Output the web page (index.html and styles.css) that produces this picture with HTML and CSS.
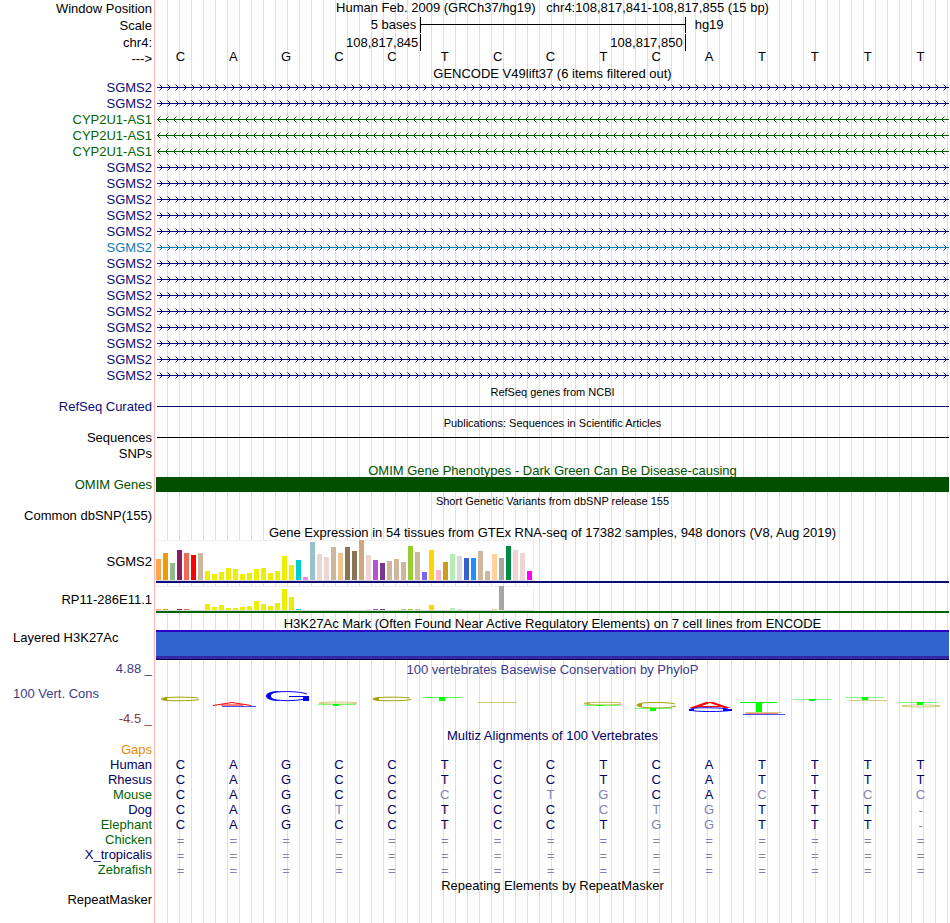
FILE: index.html
```html
<!DOCTYPE html>
<html lang="en">
<head>
    <meta charset="UTF-8">
    <meta name="viewport" content="width=device-width, initial-scale=1.0">
    <title>Genome Browser chr4:108,817,841-108,817,855</title>
    <link rel="stylesheet" href="styles.css">
</head>
<body>
    <!-- arrow patterns shared by the gene rows -->
    <svg class="defs" aria-hidden="true">
        <defs>
            <pattern id="coding" width="8" height="16" patternUnits="userSpaceOnUse">
                <path class="arrow coding" d="M3.5 4.5L6.5 7.5L3.5 10.5"/>
            </pattern>
            <pattern id="noncoding" width="8" height="16" patternUnits="userSpaceOnUse">
                <path class="arrow noncoding" d="M4.5 4.5L1.5 7.5L4.5 10.5"/>
            </pattern>
            <pattern id="other" width="8" height="16" patternUnits="userSpaceOnUse">
                <path class="arrow other" d="M3.5 4.5L6.5 7.5L3.5 10.5"/>
            </pattern>
        </defs>
    </svg>

    <main class="browser">
        <div class="row ruler">
            <span class="label">Window Position</span>
            <h1 class="position">Human Feb. 2009 (GRCh37/hg19) &nbsp; chr4:108,817,841-108,817,855 (15 bp)</h1>
        </div>
        <div class="row ruler">
            <span class="label">Scale</span>
            <div class="thirds scale">
                <span class="before">5 bases</span>
                <span class="tick"><span class="bar"></span></span>
                <span class="tick after">hg19</span>
            </div>
        </div>
        <div class="row ruler">
            <span class="label">chr4:</span>
            <div class="thirds coords">
                <span class="before">108,817,845</span>
                <span class="tick before">108,817,850</span>
                <span class="tick"></span>
            </div>
        </div>
        <div class="row strand">
            <span class="label">---&gt;</span>
            <div class="bases" data-seq="CAGCCTCCTCATTTT"></div>
        </div>

        <h2 class="title tight">GENCODE V49lift37 (6 items filtered out)</h2>
        <div id="genes"></div>

        <h2 class="title small">RefSeq genes from NCBI</h2>
        <div class="row">
            <span class="label coding">RefSeq Curated</span>
            <div class="line coding"></div>
        </div>

        <h2 class="title small">Publications: Sequences in Scientific Articles</h2>
        <div class="row">
            <span class="label">Sequences</span>
            <div class="line"></div>
        </div>
        <div class="row">
            <span class="label">SNPs</span>
        </div>

        <h2 class="title omim">OMIM Gene Phenotypes - Dark Green Can Be Disease-causing</h2>
        <div class="row">
            <span class="label omim">OMIM Genes</span>
            <div class="omim-bar"></div>
        </div>

        <h2 class="title small">Short Genetic Variants from dbSNP release 155</h2>
        <div class="row">
            <span class="label">Common dbSNP(155)</span>
        </div>

        <h2 class="title tall">Gene Expression in 54 tissues from GTEx RNA-seq of 17382 samples, 948 donors (V8, Aug 2019)</h2>
        <div class="row gtex">
            <span class="label">SGMS2</span>
            <div class="expression coding"><div class="bars high" id="gtex-sgms2"></div></div>
        </div>
        <div class="row gtex">
            <span class="label">RP11-286E11.1</span>
            <div class="expression noncoding"><div class="bars low" id="gtex-rp11"></div></div>
        </div>

        <h2 class="title histone">H3K27Ac Mark (Often Found Near Active Regulatory Elements) on 7 cell lines from ENCODE</h2>
        <div class="row">
            <span class="label left">Layered H3K27Ac</span>
            <div class="h3k27ac"></div>
        </div>

        <div class="row conservation">
            <div class="axis">
                <span class="label phylop">4.88 _</span>
                <span class="label phylop left">100 Vert. Cons</span>
                <span class="label negative">-4.5 _</span>
            </div>
            <div>
                <h2 class="phylop">100 vertebrates Basewise Conservation by PhyloP</h2>
                <svg class="logo" viewBox="0 0 793 49" preserveAspectRatio="none" role="img" aria-label="Conservation logo">
                    <!-- 1 -->
                    <g class="c"><path d="M42 20C38 19 5 18.500 5 21S38 23 43 21.500"/><path class="cfill" d="M5 21L11 19V23Z"/></g>
                    <!-- 2 -->
                    <path class="a" d="M57 27.5L76 24.5L95 27.5M65 27H87"/>
                    <path class="g thin" d="M66 28.5H100"/>
                    <!-- 3 -->
                    <path class="g" d="M151 16C141 12.500 111 12.500 111 18S143 24 151 20"/>
                    <path class="gfill" d="M110 18C110 14 118 13 124 13C117 15 115 16 115 18S117 21 124 23C118 23 110 22 110 18Z"/>
                    <path class="g" d="M133 18.500H153"/><rect class="gfill" x="147" y="18" width="6" height="5"/>
                    <!-- 4 -->
                    <ellipse class="c faint" cx="182" cy="25" rx="19" ry="1"/>
                    <path class="t faint" d="M162 26.500H200"/><rect class="tfill" x="177" y="26" width="6" height="2"/>
                    <!-- 5 -->
                    <g class="c"><path d="M254 20C250 19 217 18.500 217 21S250 23 255 21.500"/><path class="cfill" d="M216 21L223 19V23Z"/></g>
                    <!-- 6 -->
                    <path class="t thin" d="M267 19.500H305"/><rect class="tfill" x="283" y="19" width="6" height="4"/>
                    <!-- 7 -->
                    <path class="c faint" d="M322 24.500H361"/>
                    <!-- 9 -->
                    <g class="c thin"><path d="M465 25C461 24 428 24 428 25.500S461 27.500 466 26"/><path class="cfill" d="M427 25.500L434 24V27Z"/></g>
                    <path class="t faint" d="M428 27.500H464"/><rect class="tfill" x="441" y="27" width="6" height="1"/>
                    <!-- 10 -->
                    <g class="c"><path d="M519 26C513 24 482 23.500 481 27S512 31 520 28"/><path class="cfill" d="M480 27L486 25V29Z"/></g>
                    <path class="t faint" d="M478 30.500H516"/><rect class="tfill" x="494" y="30" width="6" height="3"/>
                    <!-- 11 -->
                    <path class="afill" d="M533 30L550 24H557L575 30H568L554 25L540 30Z"/><path class="a" d="M542 28.500H566"/>
                    <path class="g" d="M572 31C564 29.500 534 29 534 31.500S564 34 574 32.500"/><rect class="gfill" x="533" y="31" width="5" height="2"/><rect class="gfill" x="567" y="31" width="9" height="2"/>
                    <!-- 12 -->
                    <path class="t" d="M584 24.500H621"/><rect class="tfill" x="600" y="24" width="6" height="10"/>
                    <path class="c faint" d="M589 34.500H626"/><path class="a faint" d="M590 35.500H622"/><path class="g thin" d="M587 36.500H629"/>
                    <!-- 13 -->
                    <path class="t faint" d="M637 21.500H675"/><rect class="tfill" x="653" y="21" width="6" height="2"/>
                    <!-- 14 -->
                    <path class="t faint" d="M690 19.500H728"/><rect class="tfill" x="706" y="19" width="6" height="3"/>
                    <path class="c faint" d="M693 22.500H731"/>
                    <!-- 15 -->
                    <path class="t faint" d="M743 24.500H781"/><rect class="tfill" x="761" y="24" width="6" height="3"/>
                    <ellipse class="c faint" cx="765" cy="28" rx="19" ry="1"/>
                </svg>
            </div>
        </div>

        <h2 class="title multiz">Multiz Alignments of 100 Vertebrates</h2>
        <div class="row species"><span class="label gaps">Gaps</span></div>
        <div id="alignments"></div>

        <h2 class="title">Repeating Elements by RepeatMasker</h2>
        <div class="row">
            <span class="label">RepeatMasker</span>
        </div>
    </main>

    <script src="script.js"></script>
</body>
</html>
```

FILE: styles.css
```css
body {
    margin: 0 1px 0 0;
    background-color: #fff;
    color: #000;
    font-family: "Liberation Sans", Arial, sans-serif;
    font-size: 13px;
    line-height: 16px;
}
h1, h2 {
    margin: 0;
    font-size: 13px;
    font-weight: normal;
    text-align: center;
    white-space: nowrap;
}
.defs {
    position: absolute;
    width: 0;
    height: 0;
}

/* label column, red divider, then a guideline every 12px */
.browser {
    min-height: 100vh;
    background:
        linear-gradient(#fff, #fff) 0 0 / 154px 100% no-repeat,
        linear-gradient(#ffb4b4, #ffb4b4) 154px 0 / 1px 100% no-repeat,
        linear-gradient(#fff, #fff) 155px 0 / 12px 100% no-repeat,
        linear-gradient(to right, #dcdcf8 1px, transparent 1px) 167px 0 / 12px 100%;
}
.row {
    display: grid;
    grid-template-columns: 152px 1fr;
    column-gap: 4px;
}
.label {
    text-align: right;
    white-space: nowrap;
}
.label.left {
    text-align: left;
    padding-left: 13px;
}
.title {
    height: 15px;
    padding-left: 156px;
    line-height: 17px;
}
.title.small {
    font-size: 11px;
}
.title.tight {
    height: 14px;
    line-height: 16px;
}
.title.tall {
    height: 16px;
    line-height: 18px;
}
.title.histone {
    height: 14px;
    padding-top: 3px;
    line-height: 16px;
}

/* track colours */
.coding { color: #0c0c78; }
.noncoding { color: #006400; }
.other { color: #1478b4; }
.omim { color: #005000; }
.phylop { color: #3c3c8c; }
.negative { color: #8c3c3c; }
.multiz { color: #000064; }
.gaps { color: #e68a00; }

/* ruler */
.ruler .label {
    line-height: 17px;
}
.thirds {
    display: grid;
    grid-template-columns: repeat(3, 1fr);
}
.before {
    text-align: right;
    padding-right: 4px;
}
.after {
    padding-left: 9px;
}
.tick {
    border-left: 1px solid #000;
}
.scale {
    margin-bottom: 1px;
}
.coords {
    height: 15px;
    line-height: 17px;
}
.coords .before {
    padding-right: 2px;
}
.bar {
    display: block;
    height: 1px;
    margin-top: 7px;
    background-color: #000;
}
.strand {
    line-height: 15px;
}
.strand .bases {
    line-height: 11px;
}
.bases {
    display: grid;
    grid-template-columns: repeat(15, 1fr);
    text-align: center;
}
.bases span {
    padding-right: 4px;
}

/* genes */
.intron {
    display: block;
    width: 100%;
    height: 16px;
}
.intron line, .arrow {
    stroke: currentColor;
    stroke-width: 1;
    fill: none;
}
.line {
    height: 1px;
    margin: 7px 0 0 1px;
    background-color: currentColor;
}
.omim-bar {
    height: 15px;
    background-color: #005000;
}

/* GTEx */
.gtex {
    align-items: center;
}
.gtex + .gtex {
    margin-top: 3px;
}
.expression {
    border-bottom: 2px solid currentColor;
}
.bars {
    display: flex;
    align-items: flex-end;
    gap: 2px;
    width: max-content;
    padding-right: 1px;
    background-color: #fff;
    border-right: 1px solid #f0f0f0;
    border-bottom: 1px solid #dcdcdc;
    box-shadow: inset 0 1px #f0f0f0;
}
.bars.high {
    height: 40px;
}
.bars.low {
    height: 24px;
}
.bars span {
    width: 5px;
}

.h3k27ac {
    height: 24px;
    background-color: #3063cc;
    border-top: 2px solid #2800c8;
    border-bottom: 3px solid #3228a8;
    box-shadow: 0 1px #0c0050;
    margin-bottom: 1px;
}

/* conservation */
.conservation {
    padding-top: 1px;
}
.conservation h2 {
    padding-top: 1px;
}
.axis {
    display: flex;
    flex-direction: column;
    gap: 9px;
}
.logo {
    display: block;
    width: 100%;
    height: 49px;
}
.logo path, .logo ellipse {
    fill: none;
}
.c { stroke: #a0a000; }
.a { stroke: #ff0000; }
.g { stroke: #0000ff; }
.t { stroke: #00ff00; }
.logo .cfill { fill: #a0a000; stroke: none; }
.logo .afill { fill: #ff0000; }
.logo .gfill { fill: #0000ff; }
.tfill { fill: #00ff00; }
.faint { opacity: 0.5; }
.thin { opacity: 0.7; }

/* alignments */
.species {
    line-height: 15px;
}
.species .bases {
    color: #000064;
}
.species .mismatch {
    color: #8282b4;
}
.species .gap {
    color: #8282b4;
    line-height: 17px;
    height: 15px;
}
```

FILE: script.js
```javascript
const genes = [
    'coding', 'coding', 'noncoding', 'noncoding', 'noncoding',
    'coding', 'coding', 'coding', 'coding', 'coding', 'other',
    'coding', 'coding', 'coding', 'coding', 'coding', 'coding', 'coding', 'coding'
];

// lower case = differs from human
const alignments = [
    ['Human', 'CAGCCTCCTCATTTT', 'multiz'],
    ['Rhesus', 'CAGCCTCCTCATTTT', 'multiz'],
    ['Mouse', 'CAGCCcCtgCAcTcc', 'noncoding'],
    ['Dog', 'CAGtCTCCctgTTT-', 'multiz'],
    ['Elephant', 'CAGCCTCCTggTTT-', 'noncoding'],
    ['Chicken', '===============', 'noncoding'],
    ['X_tropicalis', '===============', 'multiz'],
    ['Zebrafish', '===============', 'noncoding']
];

const brain = Array(13).fill('#eeee00');
const tissueColors = [
    '#ffa54f', '#ee9a00', '#8fbc8f', '#8b1c62', '#ee6a50', '#ff0000', '#cdb79e',
    ...brain,
    '#00cdcd', '#ee82ee', '#9ac0cd', '#eed5d2', '#eed5d2', '#cdb79e', '#eec591',
    '#8b7355', '#8b7355', '#cdaa7d', '#eed5d2', '#b452cd', '#7a378b', '#cdb79e',
    '#cdb79e', '#cdb79e', '#9acd32', '#cdb79e', '#7a67ee', '#ffd700', '#ffb6c1',
    '#cd9b1d', '#b4eeb4', '#d9d9d9', '#3a5fcd', '#1e90ff', '#cdb79e', '#cdb79e',
    '#ffd39b', '#a6a6a6', '#008b45', '#eed5d2', '#eed5d2', '#ff00ff'
];
const sgms2 = [
    21, 27, 17, 30, 27, 25, 27, 9, 6, 8, 12, 11, 6, 7, 11, 12, 7, 9, 24, 15,
    20, 3, 38, 26, 23, 33, 27, 33, 29, 40, 25, 20, 17, 19, 21, 18, 34, 28, 8, 30,
    10, 18, 26, 24, 22, 22, 29, 9, 26, 22, 34, 30, 27, 9
];
const rp11 = [
    1, 1, 0, 1, 1, 0, 0, 6, 3, 5, 2, 2, 3, 4, 9, 6, 4, 7, 21, 13,
    1, 0, 0, 0, 0, 0, 0, 0, 0, 0, 1, 1, 1, 0, 0, 1, 1, 1, 0, 5,
    0, 0, 2, 1, 0, 0, 0, 0, 1, 24, 0, 0, 0, 0
];

function baseClass(base) {
    if (base === '=' || base === '-') return 'gap';
    return base === base.toUpperCase() ? 'match' : 'mismatch';
}

function baseCells(seq) {
    return [...seq].map(base =>
        `<span class="${baseClass(base)}">${base.toUpperCase()}</span>`
    ).join('');
}

function drawBars(id, values) {
    document.getElementById(id).innerHTML = values.map((value, i) =>
        `<span style="height: ${value}px; background-color: ${tissueColors[i]}"></span>`
    ).join('');
}

document.getElementById('genes').innerHTML = genes.map(type => `
    <div class="row ${type}">
        <span class="label">${type === 'noncoding' ? 'CYP2U1-AS1' : 'SGMS2'}</span>
        <svg class="intron">
            <line x1="1" y1="7.5" x2="100%" y2="7.5"/>
            <rect width="100%" height="16" fill="url(#${type})"/>
        </svg>
    </div>`).join('');

document.getElementById('alignments').innerHTML = alignments.map(([name, seq, color]) => `
    <div class="row species">
        <span class="label ${color}">${name}</span>
        <div class="bases">${baseCells(seq)}</div>
    </div>`).join('');

document.querySelectorAll('[data-seq]').forEach(el => {
    el.innerHTML = baseCells(el.dataset.seq);
});

drawBars('gtex-sgms2', sgms2);
drawBars('gtex-rp11', rp11);
```
